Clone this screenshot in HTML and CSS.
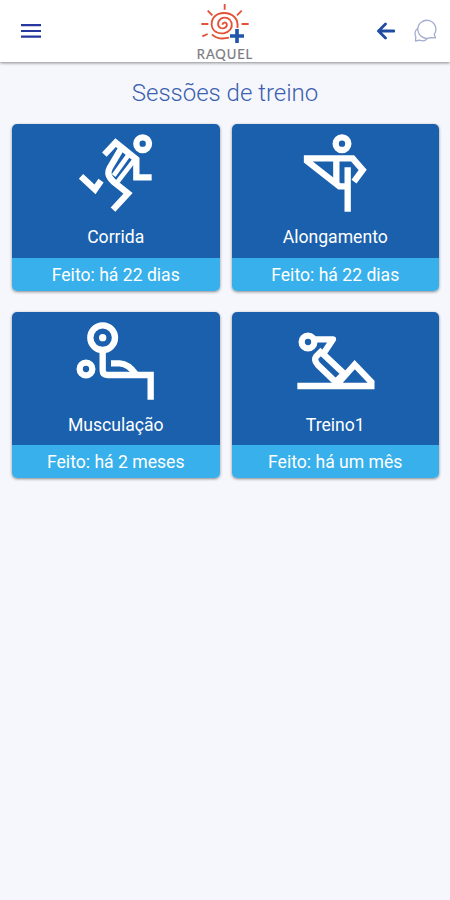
FILE: index.html
```
<!DOCTYPE html>
<html lang="pt">
<head>
  <meta charset="UTF-8">
  <meta name="viewport" content="width=device-width, initial-scale=1">
  <title>Sessões de treino</title>
  <link rel="stylesheet" href="styles.css">
</head>
<body>

<header class="topbar">
  <button class="icon-btn menu" aria-label="Menu">
    <svg width="20" height="14" viewBox="0 0 20 14"><path d="M0 1.2h20M0 7h20M0 12.6h20"/></svg>
  </button>

  <div class="logo">
    <svg width="80" height="46" viewBox="0 0 240 138">
      <g class="sun">
        <path d="M119 12v17M68 32l14 14M170 32l-14 14M49 72h21M170 72h21M52 109l16-7"/>
        <path d="M157 84C162 56 142 39 117 39C92 39 79 55 80 75C82 94 98 102 116 100C134 97 143 83 140 69C136 55 121 49 108 56C97 63 96 78 107 84C118 88 128 80 125 71C122 66 114 66 112 74"/>
        <path d="M81 103C94 116 111 118 132 113"/>
      </g>
      <path class="plus" d="M156 87v42M135 108h42"/>
    </svg>
    <span>RAQUEL</span>
  </div>

  <div class="actions">
    <button class="icon-btn back" aria-label="Voltar">
      <svg width="18" height="18" viewBox="0 0 18 18"><path d="M8.500 2L1.500 9l7 7M2 9h15"/></svg>
    </button>
    <button class="icon-btn chat" aria-label="Mensagens">
      <svg width="24" height="24" viewBox="0 0 24 24">
        <path d="M21.200 15.500A9 9 0 1 0 17.300 18.600L22.500 18.800Z"/>
        <path d="M4.800 9.200C1.800 11.500 1.300 14.500 2.800 17.500L2.500 22L6.500 21.200C9.500 22.500 12.500 21.800 14.500 19.300"/>
      </svg>
    </button>
  </div>
</header>

<main>
  <h1>Sessões de treino</h1>

  <div class="sessions">
    <a class="card">
      <div class="card-body">
        <svg class="figure" viewBox="3 -3 300 285">
          <circle cx="233" cy="56" r="19"/>
          <path d="M118 89L152 53L214 103V157H260"/>
          <path d="M167 73L134 129Q125 146 137 161L146 171L189 205L144 254"/>
          <path class="thin" d="M209 104L158 170"/>
          <path class="thin" d="M189 92L146 152"/>
          <path d="M48 154L90 193L108 167"/>
        </svg>
        <span class="name">Corrida</span>
      </div>
      <div class="done">Feito: há 22 dias</div>
    </a>

    <a class="card">
      <div class="card-body">
        <svg class="figure" viewBox="-13 -3 300 285">
          <circle cx="158" cy="56" r="19"/>
          <path d="M175 184H150L53 108V100H190L220 135L194 170"/>
          <path d="M141 104V171M175 127V260"/>
        </svg>
        <span class="name">Alongamento</span>
      </div>
      <div class="done">Feito: há 22 dias</div>
    </a>

    <a class="card">
      <div class="card-body short">
        <svg class="figure" viewBox="3 -9 300 285">
          <circle cx="113" cy="68" r="37"/>
          <circle class="dot" cx="113" cy="68" r="11"/>
          <circle cx="63" cy="162" r="19"/>
          <path d="M113 108V166Q113 180 127 180H257V254"/>
          <path d="M138 145H164Q191 147 211 176"/>
        </svg>
        <span class="name">Musculação</span>
      </div>
      <div class="done">Feito: há 2 meses</div>
    </a>

    <a class="card">
      <div class="card-body short">
        <svg class="figure" viewBox="-1 -9 300 285">
          <circle cx="68" cy="81" r="19"/>
          <path class="round" d="M88 73H143L116 113"/>
          <path d="M112 105L93 124Q84 135 97 149L151 201L176 176L112 116"/>
          <path d="M36 213H258V201L208 149L160 203"/>
        </svg>
        <span class="name">Treino1</span>
      </div>
      <div class="done">Feito: há um mês</div>
    </a>
  </div>
</main>

</body>
</html>
```
FILE: styles.css
```
* {
  box-sizing: border-box;
}

body {
  margin: 0;
  min-height: 100vh;
  background: #f5f7fc;
  font-family: Roboto, sans-serif;
}

svg {
  display: block;
  fill: none;
}

.topbar {
  display: grid;
  grid-template-columns: 1fr 80px 1fr;
  height: 62px;
  background: #fff;
  box-shadow: 0 1px 3px rgba(0, 0, 0, 0.45);
}

.icon-btn {
  padding: 0;
  border: none;
  background: none;
  cursor: pointer;
}

.menu {
  justify-self: start;
  align-self: center;
  margin-left: 21px;
}

.menu svg {
  stroke: #2637a0;
  stroke-width: 2.2;
}

.logo {
  display: flex;
  flex-direction: column;
  align-items: center;
}

.logo span {
  font-family: Lato, sans-serif;
  font-size: 13px;
  line-height: 16px;
  letter-spacing: 0.9px;
  color: #7b7b80;
  -webkit-text-stroke: 0.2px #7b7b80;
}

.sun {
  stroke: #e45137;
  stroke-width: 5.5;
}

.plus {
  stroke: #2256aa;
  stroke-width: 11;
}

.actions {
  display: flex;
  justify-content: flex-end;
  align-items: center;
  gap: 18px;
  padding-right: 13px;
}

.back svg {
  stroke: #1f4ca2;
  stroke-width: 2.8;
  stroke-linecap: round;
  stroke-linejoin: round;
}

.chat svg {
  stroke: #a5acd0;
  stroke-width: 1.3;
  stroke-linejoin: round;
}

h1 {
  margin: 0;
  padding-top: 16px;
  height: 62px;
  font-size: 24px;
  line-height: 30px;
  font-weight: 300;
  text-align: center;
  color: #3c5fae;
}

.sessions {
  display: grid;
  grid-template-columns: 1fr 1fr;
  gap: 21px 12px;
  padding: 0 11px 0 12px;
}

.card {
  overflow: hidden;
  border-radius: 5px;
  color: #fff;
  text-align: center;
  box-shadow: 0 1px 3px rgba(0, 0, 0, 0.45);
}

.card-body {
  display: flex;
  flex-direction: column;
  align-items: center;
  height: 134px;
  background: #1b60ac;
}

.card-body.short {
  height: 133px;
}

.figure {
  width: 100px;
  height: 95px;
  stroke: #fff;
  stroke-width: 19;
}

.figure .thin {
  stroke-width: 14;
}

.figure .round {
  stroke-linejoin: round;
}

.figure .dot {
  fill: #fff;
  stroke: none;
}

.name {
  margin-top: 8px;
  font-size: 17.6px;
  line-height: 21px;
}

.done {
  height: 33px;
  background: #38b0eb;
  font-size: 17.6px;
  line-height: 34px;
}
```
